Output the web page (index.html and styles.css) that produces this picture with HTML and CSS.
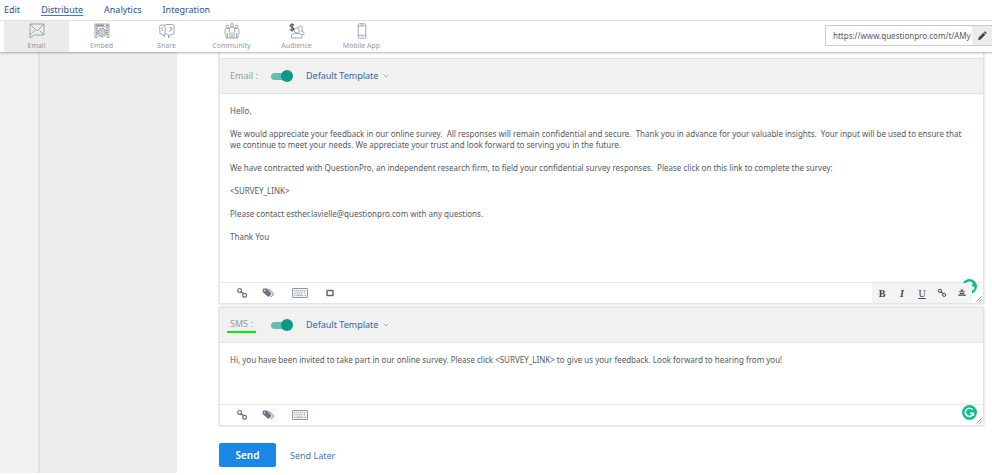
FILE: index.html
```html
<!DOCTYPE html>
<html lang="en">
  <head>
    <meta charset="UTF-8" />
    <meta name="viewport" content="width=device-width, initial-scale=1.0" />
    <title>Distribute</title>
    <link rel="stylesheet" href="styles.css">
  </head>
  <body>
  <!-- Shared icons -->
  <svg class="sprite" aria-hidden="true">
    <symbol id="link" viewBox="0 0 12 12">
      <g fill="none" stroke="#66707b" stroke-width="1.2">
        <circle cx="3.6" cy="3.4" r="1.9" />
        <circle cx="8.6" cy="8.2" r="1.9" />
        <path d="M4.4 5.6h2.4v.9" />
      </g>
    </symbol>
    <symbol id="tags" viewBox="0 0 12 12">
      <path d="M.6 2.4 1.4 1.6h3.4l4.4 4.6c.4.4.4.8 0 1.2L7 9.6c-.4.4-.8.4-1.2 0L.6 5z" fill="#6b7480" />
      <path d="m6.2 1.8 5 4.6c.4.4.4.8 0 1.2L8.8 10" fill="none" stroke="#6b7480" />
      <circle cx="2.5" cy="3.5" r=".8" fill="#fff" />
    </symbol>
    <symbol id="keyboard" viewBox="0 0 16 10">
      <rect x=".5" y=".5" width="15" height="9" rx=".6" fill="#f3f4f5" stroke="#8d949c" />
      <path d="M2 2.7h12M2.6 4.8h8.6M12 4.8h2" stroke="#9aa0a7" stroke-dasharray="1.2 .8" />
      <path d="M2 7.2h1.4M4.4 7.2h6.8M12.4 7.2H14" stroke="#9aa0a7" />
    </symbol>
    <symbol id="chevron" viewBox="0 0 6 4">
      <path d="m.6.7 2.4 2.4L5.4.7" fill="none" stroke="#8a94a3" stroke-width=".8" />
    </symbol>
    <symbol id="grammar" viewBox="0 0 14 14">
      <circle cx="7" cy="7" r="7" fill="#12bd91" />
      <path d="M9.8 4.4A3.8 3.8 0 1 0 10.6 7.7H7.5M10.7 7.2v2.8" fill="none" stroke="#fff" stroke-width="1.4" />
    </symbol>
    <symbol id="grip" viewBox="0 0 6 6">
      <path d="M.4 5.6 5.6.4M3.3 5.6l2.3-2.3" stroke="#777" stroke-width=".8" />
    </symbol>
  </svg>

  <header class="header">
    <nav class="main-nav">
      <a href="#">Edit</a>
      <a href="#" class="active">Distribute</a>
      <a href="#">Analytics</a>
      <a href="#">Integration</a>
    </nav>
    <div class="sub-bar">
      <nav class="tabs">
        <a href="#" class="tab active">
          <svg viewBox="0 0 16 16">
            <path d="M1 1h14v11H5.5L1 15zM1 1l7 7 7-7M1 12l4.5-4.5M15 12l-4.5-4.5" />
          </svg>
          Email
        </a>
        <a href="#" class="tab">
          <svg viewBox="0 0 16 16">
            <path d="M3.5 14.5H1V1h14v13.5h-2.5M1 3.7h14" />
            <path d="M2 2.3h8M12 2.3h2" stroke-width="1.5" />
            <circle cx="8" cy="9.5" r="4" stroke-width="1.3" stroke-dasharray="2 .6" />
            <circle cx="8" cy="9.5" r="2.6" />
            <circle cx="8" cy="9.5" r="1" />
            <path d="M2.8 4.5v9M13.2 4.5v9" stroke-width="1.4" stroke-dasharray="1.5 .5" />
          </svg>
          Embed
        </a>
        <a href="#" class="tab">
          <svg viewBox="0 0 16 16">
            <path d="M6 2H2Q.8 2 .8 3.2v6.6Q.8 11 2 11h1l2.5 2.5V11H7M7 1.5h6.5q1.5 0 1.5 1.5v7q0 1.5-1.5 1.5H12L9.5 15v-3.5H8" />
            <path d="M7 1.5 5.5 4 7 6 5.7 9 7 11M3 4v2l1 2M10 4l2 1v2l-2 2M12.5 4.5l1 2" />
          </svg>
          Share
        </a>
        <a href="#" class="tab">
          <svg viewBox="0 0 16 16">
            <circle cx="8" cy="2" r="1.5" />
            <circle cx="3.5" cy="3.5" r="1.4" />
            <circle cx="12.5" cy="3.5" r="1.4" />
            <path d="M6 15V10L5.3 9V6q0-2 2.7-2t2.7 2v3l-.7 1v5zM8 9v6M5 5.5H3Q1 5.5 1 8v3l1 .5V15h4M11 5.5h2q2 0 2 2.5v3l-1 .5V15h-4M3.5 10v5M12.5 10v5" />
          </svg>
          Community
        </a>
        <a href="#" class="tab">
          <svg viewBox="0 0 16 16">
            <path class="dollar" d="M5 2.3Q4 1.3 2.5 1.5T1.2 3.2Q1.5 4.2 3 4.3T4.8 5.8Q4.6 7.2 3 7.2T.8 6.2M3 .2v8.3" />
            <circle cx="7.7" cy="7.5" r="2.5" />
            <path d="M2.5 15v-2q0-2.5 3-2.5h4.3q3 0 3 2.5v2zM9 5.2q.2-2 2.2-2 2.3 0 2.3 2.3 0 2-1.7 2.5h1.4q1.8.3 1.8 2.5v1H13" />
          </svg>
          Audience
        </a>
        <a href="#" class="tab">
          <svg viewBox="0 0 16 16">
            <rect x="4.2" y=".7" width="7.6" height="14.5" rx="1.4" />
            <path d="M4.2 3h7.6M4.2 12.3h7.6M7 1.9h2M7.5 13.7h1" />
          </svg>
          Mobile App
        </a>
      </nav>
      <div class="survey-url">
        <input type="text" aria-label="Survey link" value="https://www.questionpro.com/t/AMy" />
        <button type="button" aria-label="Edit link">
          <svg viewBox="0 0 10 10">
            <path d="m1 9 .6-2.6 4.7-4.7 2 2-4.7 4.7zM6.8 1.2l.7-.6q.4-.3.8 0l1.1 1.1q.3.4 0 .8l-.6.7z" fill="#444" />
          </svg>
        </button>
      </div>
    </div>
  </header>

  <div class="page">
    <div class="rail"></div>
    <aside class="sidebar"></aside>

    <main class="content">
      <section class="card email-card">
        <div class="card-header">
          <label for="emailToggle" class="channel"><span>Email :</span></label>
          <input type="checkbox" id="emailToggle" class="toggle" checked />
          <div class="template">
            <select aria-label="Email template"><option>Default Template</option></select>
            <svg><use href="#chevron" /></svg>
          </div>
        </div>
        <div class="message" contenteditable="true" spellcheck="false" role="textbox" aria-multiline="true" aria-label="Email message">
          <p>Hello,</p>
          <p>We would appreciate your feedback in our online survey.&nbsp; All responses will remain confidential and secure.&nbsp; Thank you in advance for your valuable insights.&nbsp; Your input will be used to ensure that we continue to meet your needs. We appreciate your trust and look forward to serving you in the future.</p>
          <p>We have contracted with QuestionPro, an independent research firm, to field your confidential survey responses.&nbsp; Please click on this link to complete the survey:</p>
          <p>&lt;SURVEY_LINK&gt;</p>
          <p>Please contact esther.lavielle@questionpro.com with any questions.</p>
          <p>Thank You</p>
        </div>
        <div class="card-footer">
          <div class="inserts">
            <button type="button" aria-label="Insert link"><svg><use href="#link" /></svg></button>
            <button type="button" aria-label="Insert tag"><svg><use href="#tags" /></svg></button>
            <button type="button" aria-label="Keyboard" class="wide"><svg><use href="#keyboard" /></svg></button>
            <button type="button" aria-label="Insert button">
              <svg viewBox="0 0 12 12"><rect x="3" y="3.5" width="6" height="5" rx=".6" fill="none" stroke="#5f6873" stroke-width="1.5" /></svg>
            </button>
          </div>
          <div class="format">
            <button type="button" class="bold">B</button>
            <button type="button" class="italic">I</button>
            <button type="button" class="underline">U</button>
            <button type="button" aria-label="Link" class="dark"><svg><use href="#link" /></svg></button>
            <button type="button" aria-label="Align center">
              <svg viewBox="0 0 12 12"><path d="M4.5 2.5h3M2.5 4.5h7M3.5 6.5h5M1.5 8.5h9" stroke="#444" stroke-width="1.3" /></svg>
            </button>
          </div>
          <svg class="grammar"><use href="#grammar" /></svg>
          <svg class="grip"><use href="#grip" /></svg>
        </div>
      </section>

      <section class="card sms-card">
        <div class="card-header">
          <label for="smsToggle" class="channel marked"><span>SMS :</span></label>
          <input type="checkbox" id="smsToggle" class="toggle" checked />
          <div class="template">
            <select aria-label="SMS template"><option>Default Template</option></select>
            <svg><use href="#chevron" /></svg>
          </div>
        </div>
        <textarea class="message" spellcheck="false" aria-label="SMS message">Hi, you have been invited to take part in our online survey. Please click &lt;SURVEY_LINK&gt; to give us your feedback. Look forward to hearing from you!</textarea>
        <div class="card-footer">
          <div class="inserts">
            <button type="button" aria-label="Insert link"><svg><use href="#link" /></svg></button>
            <button type="button" aria-label="Insert tag"><svg><use href="#tags" /></svg></button>
            <button type="button" aria-label="Keyboard" class="wide"><svg><use href="#keyboard" /></svg></button>
          </div>
          <svg class="grammar"><use href="#grammar" /></svg>
          <svg class="grip"><use href="#grip" /></svg>
        </div>
      </section>

      <div class="actions">
        <button type="submit" class="send-btn">Send</button>
        <a href="#">Send Later</a>
      </div>
    </main>
  </div>
  </body>
</html>
```

FILE: styles.css
```css
* {
  margin: 0;
  padding: 0;
  box-sizing: border-box;
  font-family: "Noto Sans", sans-serif;
}

body {
  background: #fff;
  color: #55595f;
  min-height: 100vh;
  padding-bottom: 2px;
  display: flex;
  flex-direction: column;
}

a {
  text-decoration: none;
}

button {
  border: none;
  background: none;
  cursor: pointer;
}

.sprite {
  display: none;
}

/* Header */
.header {
  position: relative;
  background: #fff;
  box-shadow: 0 1px 2px rgba(0, 0, 0, 0.3);
}

.main-nav {
  display: flex;
  gap: 21px;
  height: 21px;
  padding: 2px 4px 0;
  border-bottom: 1px solid #e0e0e0;
}

.main-nav a {
  height: 14px;
  font-size: 9px;
  line-height: 15px;
  color: #27529b;
}

.main-nav .active {
  border-bottom: 1px solid #1b87e6;
}

.sub-bar {
  display: flex;
  justify-content: space-between;
  align-items: center;
  height: 31px;
}

.tabs {
  display: flex;
  height: 100%;
  padding-left: 4px;
}

.tab {
  width: 65px;
  display: flex;
  flex-direction: column;
  align-items: center;
  gap: 2px;
  padding-top: 2px;
  font-size: 7px;
  line-height: 10px;
  color: #949aa2;
}

.tab.active {
  background: #ebebeb;
}

.tab svg {
  width: 16px;
  height: 16px;
  fill: none;
  stroke: #8c939c;
  stroke-width: 0.8;
}

.tab .dollar {
  stroke: #4d5763;
  stroke-width: 1.2;
}

.survey-url {
  display: flex;
  height: 21px;
  margin-bottom: 2px;
  border: 1px solid #ccc;
  border-right: none;
}

.survey-url input {
  width: 146px;
  padding-left: 7px;
  border: none;
  font-size: 8px;
  color: #55595f;
}

.survey-url button {
  width: 20px;
  background: #ebebeb;
}

.survey-url svg {
  width: 10px;
  height: 10px;
}

/* Page columns */
.page {
  flex: 1;
  display: flex;
}

.rail {
  width: 40px;
  background: #f1f1f1;
  border-right: 2px solid #e0e0e0;
}

.sidebar {
  width: 137px;
  background: #ededed;
}

.content {
  flex: 1;
  min-width: 0;
  padding: 0 8px 0 42px;
}

/* Message cards */
.card {
  border: 1px solid #e3e3e3;
  box-shadow: 0 0 2px rgba(0, 0, 0, 0.2);
}

.email-card {
  padding-top: 6px;
  border-top: none;
  margin-bottom: 3px;
}

.card-header {
  display: flex;
  align-items: center;
  height: 36px;
  padding-left: 7px;
  background: #f1f1f1;
  border-top: 1px solid #e3e3e3;
  border-bottom: 1px solid #e3e3e3;
}

.sms-card .card-header {
  height: 35px;
  border-top: none;
}

.channel {
  width: 44px;
  font-size: 9px;
  line-height: 14px;
  color: #999;
}

.channel span {
  display: inline-block;
  padding: 0 3px;
}

.marked span {
  border-bottom: 2px solid #00f000;
}

.toggle {
  appearance: none;
  position: relative;
  width: 22px;
  height: 12px;
  cursor: pointer;
}

.toggle::before {
  content: "";
  position: absolute;
  top: 3px;
  left: 0;
  width: 18px;
  height: 7px;
  border-radius: 4px;
  background: #bbb;
}

.toggle::after {
  content: "";
  position: absolute;
  top: 0;
  left: 0;
  width: 12px;
  height: 12px;
  border-radius: 50%;
  background: #888;
}

.toggle:checked::before {
  background: #5fc2b1;
}

.toggle:checked::after {
  left: 10px;
  background: #0f9788;
}

.template {
  display: flex;
  align-items: center;
  gap: 4px;
  padding-left: 13px;
}

.template select {
  appearance: none;
  border: none;
  background: none;
  font-size: 9px;
  line-height: 14px;
  color: #3466ad;
}

.template svg {
  width: 6px;
  height: 4px;
}

.message {
  display: block;
  width: 100%;
  padding: 11px 10px;
  border: none;
  outline: none;
  resize: none;
  font-size: 8px;
  line-height: 11px;
  color: #55595f;
}

.message p {
  margin-bottom: 12px;
}

.email-card .message {
  min-height: 188px;
}

.sms-card .message {
  height: 61px;
}

.card-footer {
  position: relative;
  display: flex;
  justify-content: space-between;
  height: 21px;
  padding-right: 11px;
  border-top: 1px solid #e8e8e8;
}

.inserts {
  display: flex;
  align-items: center;
  gap: 14px;
  padding-left: 16px;
}

.inserts button,
.format button {
  display: flex;
  align-items: center;
  justify-content: center;
}

.inserts svg {
  width: 12px;
  height: 12px;
}

.inserts .wide {
  padding: 0 2px 0 4px;
}

.inserts .wide svg {
  width: 16px;
  height: 10px;
}

.format {
  position: relative;
  z-index: 1;
  display: flex;
  background: #f3f3f3;
}

.format button {
  width: 20px;
  font-family: "Liberation Serif", serif;
  font-size: 10px;
  font-weight: bold;
  color: #444;
}

.format svg {
  width: 10px;
  height: 10px;
}

.format .dark {
  filter: brightness(0.6);
}

.format .italic {
  font-style: italic;
}

.format .underline {
  font-weight: normal;
  text-decoration: underline;
}

/* Badges over the card corner */
.grammar {
  position: absolute;
  top: 0;
  right: 6px;
  width: 15px;
  height: 15px;
}

.email-card .grammar {
  top: -4px;
}

.grip {
  position: absolute;
  right: 1px;
  bottom: 1px;
  width: 6px;
  height: 6px;
}

/* Actions */
.actions {
  display: flex;
  align-items: center;
  gap: 14px;
  padding-top: 17px;
}

.send-btn {
  width: 57px;
  height: 24px;
  border-radius: 2px;
  background: #1b87e6;
  color: #fff;
  font-size: 10px;
  font-weight: 600;
}

.actions a {
  font-size: 9px;
  color: #2f7cc4;
}
```
